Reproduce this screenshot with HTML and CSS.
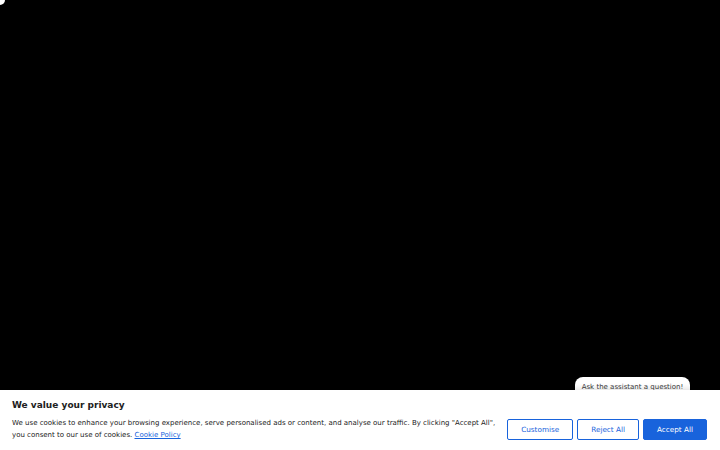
FILE: index.html
```html
<!DOCTYPE html>
<html lang="en">
  <head>
    <meta charset="UTF-8" />
    <meta name="viewport" content="width=device-width, initial-scale=1.0" />
    <title>We value your privacy</title>
    <link rel="stylesheet" href="styles.css">
  </head>
  <body>
    <div class="corner"></div>

    <main class="stage"></main>

    <div class="assistant-tip">Ask the assistant a question!</div>

    <section class="cookie-banner">
      <h2 class="cookie-title">We value your privacy</h2>
      <div class="cookie-row">
        <p class="cookie-text">
          We use cookies to enhance your browsing experience, serve personalised ads or content, and analyse our traffic. By clicking "Accept All", you consent to our use of cookies.
          <a href="#" class="cookie-link">Cookie Policy</a>
        </p>
        <div class="cookie-actions">
          <button class="btn btn-outline">Customise</button>
          <button class="btn btn-outline">Reject All</button>
          <button class="btn btn-solid">Accept All</button>
        </div>
      </div>
    </section>
  </body>
</html>
```

FILE: styles.css
```css
* {
  margin: 0;
  padding: 0;
  box-sizing: border-box;
}

body {
  width: 100vw;
  height: 100vh;
  overflow: hidden;
  background-color: #000;
  font-family: "DejaVu Sans", sans-serif;
  display: flex;
  flex-direction: column;
}

div.corner {
  position: absolute;
  top: -5px;
  left: -5px;
  width: 10px;
  height: 10px;
  border-radius: 50%;
  background-color: #fff;
}

main.stage {
  flex: 1;
}

div.assistant-tip {
  position: absolute;
  left: 575px;
  top: 377px;
  width: 115px;
  height: 22px;
  padding-top: 6px;
  border-radius: 8px;
  background-color: #fff;
  color: #3a3a3a;
  font-size: 7px;
  text-align: center;
}

section.cookie-banner {
  position: relative;
  height: 60px;
  padding: 9px 13px 9px 12px;
  background-color: #fff;
  color: #212121;
  box-shadow: 0 -1px 6px rgba(0, 0, 0, 0.15);
}

h2.cookie-title {
  font-size: 9px;
  line-height: 12px;
  font-weight: bold;
  margin-bottom: 6px;
}

div.cookie-row {
  display: flex;
  align-items: center;
  gap: 8px;
}

p.cookie-text {
  flex: 1;
  font-size: 7px;
  line-height: 12px;
}

a.cookie-link {
  color: #1863dc;
}

div.cookie-actions {
  display: flex;
  gap: 4px;
}

button.btn {
  height: 21px;
  padding: 0 13px;
  border: 1.5px solid #1863dc;
  border-radius: 2px;
  font-family: "DejaVu Sans", sans-serif;
  font-size: 7.25px;
  cursor: pointer;
}

button.btn-outline {
  background-color: #fff;
  color: #1863dc;
}

button.btn-solid {
  background-color: #1863dc;
  color: #fff;
}
```
